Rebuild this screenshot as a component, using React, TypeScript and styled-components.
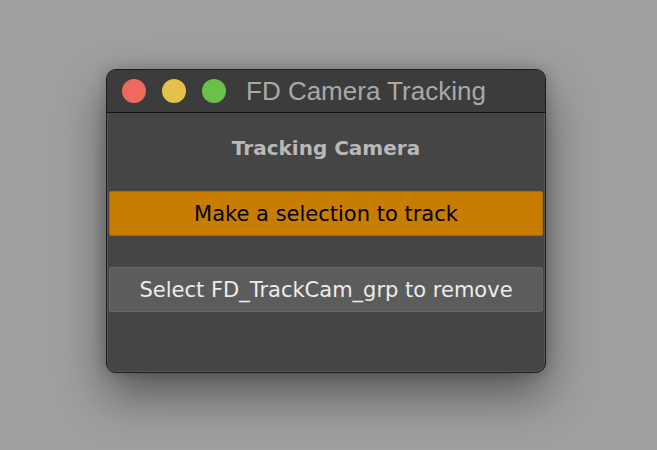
import { createGlobalStyle, styled } from "styled-components";

const GlobalStyle = createGlobalStyle`
  html, body {
    margin: 0;
    padding: 0;
    background: #9f9f9f;
  }
  body {
    width: 657px;
    height: 450px;
    overflow: hidden;
  }
`;

const Stage = styled.div`
  display: flex;
  align-items: flex-start;
  padding: 69px 0 0 106px;
  height: 450px;
  box-sizing: border-box;
`;

const Window = styled.div`
  width: 440px;
  height: 304px;
  box-sizing: border-box;
  display: flex;
  flex-direction: column;
  background: #454545;
  border: 1px solid #1c1c1c;
  border-radius: 10px;
  overflow: hidden;
  box-shadow: 0 0 0 1px rgba(120, 120, 120, 0.35) inset,
    0 22px 48px rgba(0, 0, 0, 0.45), 0 0 14px rgba(0, 0, 0, 0.2);
`;

const TitleBar = styled.div`
  height: 42px;
  flex: none;
  display: flex;
  align-items: center;
  padding-left: 15px;
  background: #3c3c3c;
  border-bottom: 1px solid #141414;
`;

const Light = styled.span<{ $color: string }>`
  width: 24px;
  height: 24px;
  border-radius: 50%;
  background: ${(p) => p.$color};
  margin-right: 16px;
  flex: none;
`;

const Title = styled.span`
  margin-left: 4px;
  font-family: "Liberation Sans", Arial, sans-serif;
  font-size: 26px;
  color: #a9a9a9;
`;

const Body = styled.div`
  display: flex;
  flex-direction: column;
  padding: 0 2px;
`;

const Heading = styled.div`
  height: 78px;
  display: flex;
  align-items: center;
  justify-content: center;
  font-family: "DejaVu Sans", Verdana, sans-serif;
  font-weight: bold;
  font-size: 20px;
  color: #b9b9b9;
  padding-bottom: 8px;
  box-sizing: border-box;
`;

const ActionButton = styled.button<{ $tone: "accent" | "plain" }>`
  height: 45px;
  margin: 0;
  border: 1px solid ${(p) => (p.$tone === "accent" ? "#a86a10" : "#666666")};
  border-radius: 2px;
  background: ${(p) => (p.$tone === "accent" ? "#c97d00" : "#5c5c5c")};
  color: ${(p) => (p.$tone === "accent" ? "#000000" : "#ececec")};
  font-family: "DejaVu Sans", Verdana, sans-serif;
  font-size: 21px;
  display: flex;
  align-items: center;
  justify-content: center;
  padding: 0;
`;

const Spacer = styled.div`
  height: 31px;
`;

export default function App() {
  return (
    <>
      <GlobalStyle />
      <Stage>
        <Window>
          <TitleBar>
            <Light $color="#ee6a5e" />
            <Light $color="#e3c14b" />
            <Light $color="#6cc04a" />
            <Title>FD Camera Tracking</Title>
          </TitleBar>
          <Body>
            <Heading>Tracking Camera</Heading>
            <ActionButton $tone="accent">Make a selection to track</ActionButton>
            <Spacer />
            <ActionButton $tone="plain">Select FD_TrackCam_grp to remove</ActionButton>
          </Body>
        </Window>
      </Stage>
    </>
  );
}
